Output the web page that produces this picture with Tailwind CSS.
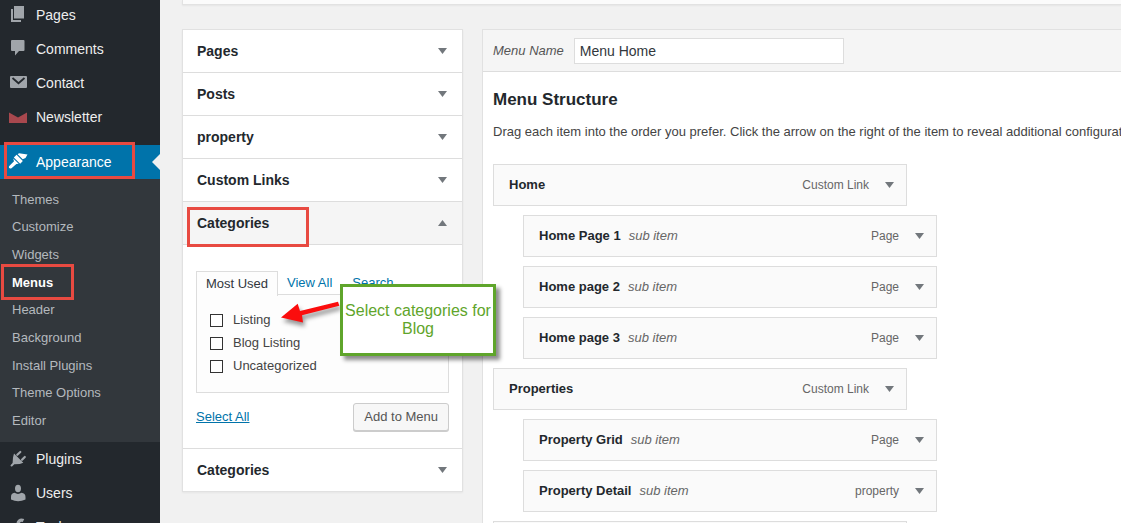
<!DOCTYPE html>
<html lang="en">
<head>
<meta charset="utf-8">
<meta name="viewport" content="width=device-width, initial-scale=1">
<title>Menus</title>
<script src="https://cdn.jsdelivr.net/npm/@tailwindcss/browser@4"></script>
</head>
<body class="flex h-screen overflow-hidden bg-[#f1f1f1] font-['Liberation_Sans',Arial,sans-serif] text-[13px] text-[#444]">

<svg class="hidden" aria-hidden="true">
  <symbol id="down" viewBox="0 0 9 6"><path d="M0 0h9L4.500 6z" fill="#72777c"/></symbol>
  <symbol id="up" viewBox="0 0 9 6"><path d="M0 6h9L4.500 0z" fill="#72777c"/></symbol>
</svg>

<nav class="-mt-0.5 w-40 shrink-0 bg-[#23282d] text-sm text-[#eee]" aria-label="Admin menu">
  <a href="#" class="flex h-[34px] items-center gap-2 pl-2">
    <svg class="size-5" viewBox="0 0 20 20" fill="#a0a5aa"><path d="M6 1h10v12.500H6zM3 4h2v11h8v2H3z"/></svg>Pages</a>
  <a href="#" class="flex h-[34px] items-center gap-2 pl-2">
    <svg class="size-5" viewBox="0 0 20 20" fill="#a0a5aa"><path d="M4 1h11.500q1 0 1 1v9q0 1-1 1H11l-4 4.500V12H4q-1 0-1-1V2q0-1 1-1z"/></svg>Comments</a>
  <a href="#" class="flex h-[34px] items-center gap-2 pl-2">
    <svg class="size-5" viewBox="0 0 20 20" fill="#a0a5aa"><rect x="2" y="3" width="17" height="12" rx="1"/><path d="M4.500 5l6 5.200L16.500 5" fill="none" stroke="#23282d" stroke-width="1.800"/></svg>Contact</a>
  <a href="#" class="flex h-[34px] items-center gap-2 pl-2">
    <svg class="size-5" viewBox="0 0 20 20" fill="#a8484e"><path d="M1 5.500l9 5 9-5V16H1z"/></svg>Newsletter</a>

  <div class="relative mt-[11px]">
    <a href="#" class="flex h-[34px] items-center gap-2 bg-[#0073aa] pl-2 text-white">
      <svg class="size-5" viewBox="0 0 20 20" fill="#fff"><path d="M11 1.200L19.500 2.500 17.500 6l-2.800 1.200-5-5z"/><path d="M8.600 2.800l6.200 6.200-2.600 2.700-6.400-6.200z"/><path d="M5.200 6.500l5.500 5.300-2.300.200-4.900 4.300q-1.600.700-2.500-.500-.500-1 .500-2L6 9.200z"/></svg>Appearance</a>
    <svg class="absolute top-[9px] right-0 h-4 w-2" viewBox="0 0 8 16"><path d="M8 0v16L0 8z" fill="#f1f1f1"/></svg>
    <div class="absolute -top-[3px] left-1 h-[37px] w-[131px] border-3 border-[#e84a41]"></div>
  </div>

  <div class="flex h-[263px] flex-col bg-[#32373c] py-[7px] text-[13px] text-[#b4b9be]">
    <a href="#" class="flex flex-1 items-center pl-3">Themes</a>
    <a href="#" class="flex flex-1 items-center pl-3">Customize</a>
    <a href="#" class="flex flex-1 items-center pl-3">Widgets</a>
    <a href="#" class="relative flex flex-1 items-center pl-3 font-bold text-white">Menus
      <span class="absolute -top-[5px] left-px h-9 w-[73px] border-3 border-[#e84a41]"></span></a>
    <a href="#" class="flex flex-1 items-center pl-3">Header</a>
    <a href="#" class="flex flex-1 items-center pl-3">Background</a>
    <a href="#" class="flex flex-1 items-center pl-3">Install Plugins</a>
    <a href="#" class="flex flex-1 items-center pl-3">Theme Options</a>
    <a href="#" class="flex flex-1 items-center pl-3">Editor</a>
  </div>

  <a href="#" class="flex h-[34px] items-center gap-2 pl-2">
    <svg class="size-5" viewBox="0 0 20 20" fill="#a0a5aa"><path d="M6 4.500l9.300 9.300-3.500 1.200-5.500.300L4 17.500q-1.400.300-1.500-1.200L4.600 14 5 8.500z"/><path d="M9.300 5.800L12.300 3M14 10.800l2.800-2.800" stroke="#a0a5aa" stroke-width="2.200" stroke-linecap="round"/></svg>Plugins</a>
  <a href="#" class="flex h-[34px] items-center gap-2 pl-2">
    <svg class="size-5" viewBox="0 0 20 20" fill="#a0a5aa"><ellipse cx="10" cy="5.500" rx="3" ry="3.800"/><path d="M6.500 9.800q3.500 2.200 7 0c2.600.300 4 1.700 4 4.200v2.500Q10 20 3 16.500V14c0-2.500 1.200-3.900 3.500-4.200z"/></svg>Users</a>
  <a href="#" class="flex h-[34px] items-center gap-2 pl-2">
    <svg class="size-5" viewBox="0 0 20 20"><path d="M15.500 3.500c-3-1.500-6.500 1-5 5L3.500 16" fill="none" stroke="#a0a5aa" stroke-width="3.200"/></svg>Tools</a>
</nav>

<main class="min-w-0 flex-1 pl-[22px]">
  <div class="h-[5px] border-b border-l border-[#e2e2e2] bg-[#fbfbfb] shadow-xs"></div>

  <div class="mt-6 flex items-start gap-[19px]">
    <aside class="w-[281px] shrink-0 border border-[#e1e1e1] bg-white text-sm font-bold text-[#23282d] shadow-xs">
      <button class="flex h-[43px] w-full items-center justify-between border-b border-[#ddd] pr-[15px] pl-3.5">Pages<svg class="h-1.5 w-[9px]"><use href="#down"/></svg></button>
      <button class="flex h-[43px] w-full items-center justify-between border-b border-[#ddd] pr-[15px] pl-3.5">Posts<svg class="h-1.5 w-[9px]"><use href="#down"/></svg></button>
      <button class="flex h-[43px] w-full items-center justify-between border-b border-[#ddd] pr-[15px] pl-3.5">property<svg class="h-1.5 w-[9px]"><use href="#down"/></svg></button>
      <button class="flex h-[43px] w-full items-center justify-between border-b border-[#ddd] pr-[15px] pl-3.5">Custom Links<svg class="h-1.5 w-[9px]"><use href="#down"/></svg></button>
      <button class="relative flex h-[43px] w-full items-center justify-between border-b border-[#ddd] bg-[#f5f5f5] pr-[15px] pl-3.5">Categories<svg class="h-1.5 w-[9px]"><use href="#up"/></svg>
        <span class="absolute top-[5px] left-1 h-10 w-[122px] border-3 border-[#e84a41]"></span></button>

      <section class="relative border-b border-[#ddd] px-[13px] pt-[26px] pb-[17px] text-[13px] font-normal text-[#444]">
        <div class="flex h-6 items-stretch">
          <a href="#" class="z-1 -mb-px flex w-[82px] items-center justify-center border border-b-0 border-[#ddd] bg-[#fdfdfd] text-[#32373c]">Most Used</a>
          <a href="#" class="flex items-center pl-[9px] text-[#0073aa]">View All</a>
          <a href="#" class="flex items-center pl-5 text-[#0073aa]">Search</a>
        </div>
        <div class="-mt-px border border-[#ddd] bg-[#fdfdfd] px-[13px] py-3.5">
          <label class="flex h-[23px] items-center gap-2.5"><input type="checkbox" class="size-[13px] appearance-none border border-[#333] bg-white">Listing</label>
          <label class="flex h-[23px] items-center gap-2.5"><input type="checkbox" class="size-[13px] appearance-none border border-[#333] bg-white">Blog Listing</label>
          <label class="flex h-[23px] items-center gap-2.5"><input type="checkbox" class="size-[13px] appearance-none border border-[#333] bg-white">Uncategorized</label>
        </div>
        <div class="mt-2.5 flex items-center justify-between">
          <a href="#" class="text-[#0073aa] underline">Select All</a>
          <button class="h-7 rounded-[3px] border border-[#ccc] bg-[#f7f7f7] px-2.5 text-[#555] shadow-[0_1px_0_#ccc]">Add to Menu</button>
        </div>

        <svg class="absolute top-[54px] left-[95px] z-10 h-8 w-[68px] drop-shadow-[2px_4px_2px_rgba(0,0,0,0.4)]" viewBox="278 299 68 32"><path d="M281 317.500L297.700 303.700l2.300 7.300 38-9.300 1.300 4-37.300 9.500 1 7.300z" fill="#fb0d0d"/></svg>
        <div class="absolute top-[39px] left-[157px] z-10 flex h-[72px] w-[156px] items-center justify-center border-3 border-[#5fa52b] bg-white text-center text-base leading-[18px] text-[#5fa52b] shadow-[4px_4px_4px_rgba(0,0,0,0.45)]">Select categories for Blog</div>
      </section>

      <button class="flex h-[42px] w-full items-center justify-between pr-[15px] pl-3.5">Categories<svg class="h-1.5 w-[9px]"><use href="#down"/></svg></button>
    </aside>

    <section class="min-w-0 flex-1 overflow-hidden border border-r-0 border-[#e1e1e1] bg-white">
      <div class="flex h-[42px] items-center gap-2.5 border-b border-[#ddd] bg-[#f5f5f5] pl-2.5">
        <label for="menu-name" class="text-[#555] italic">Menu Name</label>
        <input id="menu-name" type="text" value="Menu Home" class="h-[26px] w-[270px] border border-[#ddd] bg-white px-[5px] text-sm text-[#32373c]">
      </div>
      <div class="pt-4 pl-2.5">
        <h2 class="text-[17px] leading-6 font-bold text-[#23282d]">Menu Structure</h2>
        <p class="mt-2.5 leading-5 whitespace-nowrap">Drag each item into the order you prefer. Click the arrow on the right of the item to reveal additional configuration options.</p>
        <ul class="mt-[22px] flex flex-col gap-[9px]">
          <li class="flex h-[42px] w-[414px] items-center border border-[#ddd] bg-[#fafafa] pr-3 pl-[15px]"><b class="text-[#23282d]">Home</b><span class="ml-auto text-xs text-[#666]">Custom Link</span><svg class="ml-4 h-1.5 w-[9px]"><use href="#down"/></svg></li>
          <li class="ml-[30px] flex h-[42px] w-[414px] items-center border border-[#ddd] bg-[#fafafa] pr-3 pl-[15px]"><b class="text-[#23282d]">Home Page 1</b><i class="ml-2 text-[#666]">sub item</i><span class="ml-auto text-xs text-[#666]">Page</span><svg class="ml-4 h-1.5 w-[9px]"><use href="#down"/></svg></li>
          <li class="ml-[30px] flex h-[42px] w-[414px] items-center border border-[#ddd] bg-[#fafafa] pr-3 pl-[15px]"><b class="text-[#23282d]">Home page 2</b><i class="ml-2 text-[#666]">sub item</i><span class="ml-auto text-xs text-[#666]">Page</span><svg class="ml-4 h-1.5 w-[9px]"><use href="#down"/></svg></li>
          <li class="ml-[30px] flex h-[42px] w-[414px] items-center border border-[#ddd] bg-[#fafafa] pr-3 pl-[15px]"><b class="text-[#23282d]">Home page 3</b><i class="ml-2 text-[#666]">sub item</i><span class="ml-auto text-xs text-[#666]">Page</span><svg class="ml-4 h-1.5 w-[9px]"><use href="#down"/></svg></li>
          <li class="flex h-[42px] w-[414px] items-center border border-[#ddd] bg-[#fafafa] pr-3 pl-[15px]"><b class="text-[#23282d]">Properties</b><span class="ml-auto text-xs text-[#666]">Custom Link</span><svg class="ml-4 h-1.5 w-[9px]"><use href="#down"/></svg></li>
          <li class="ml-[30px] flex h-[42px] w-[414px] items-center border border-[#ddd] bg-[#fafafa] pr-3 pl-[15px]"><b class="text-[#23282d]">Property Grid</b><i class="ml-2 text-[#666]">sub item</i><span class="ml-auto text-xs text-[#666]">Page</span><svg class="ml-4 h-1.5 w-[9px]"><use href="#down"/></svg></li>
          <li class="ml-[30px] flex h-[42px] w-[414px] items-center border border-[#ddd] bg-[#fafafa] pr-3 pl-[15px]"><b class="text-[#23282d]">Property Detail</b><i class="ml-2 text-[#666]">sub item</i><span class="ml-auto text-xs text-[#666]">property</span><svg class="ml-4 h-1.5 w-[9px]"><use href="#down"/></svg></li>
          <li class="h-[42px] w-[414px] border border-[#ddd] bg-[#fafafa]"></li>
        </ul>
      </div>
    </section>
  </div>
</main>
</body>
</html>
